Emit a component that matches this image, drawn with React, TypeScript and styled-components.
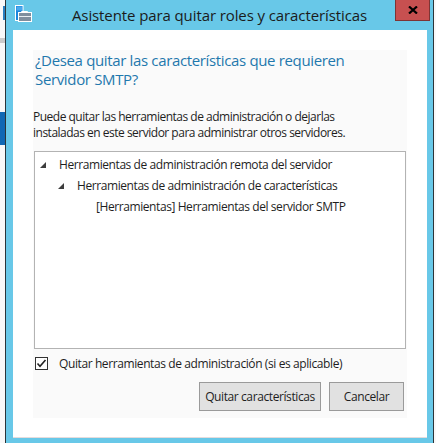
import React from "react";
import styled, { createGlobalStyle } from "styled-components";

const UI_FONT = `"Segoe UI", "Open Sans", "Noto Sans", sans-serif`;

const GlobalStyle = createGlobalStyle`
  html, body {
    margin: 0;
    padding: 0;
    background: #f7f7f7;
    overflow: hidden;
  }
  * {
    box-sizing: border-box;
  }
`;

const Desktop = styled.div`
  width: 436px;
  height: 443px;
  display: flex;
  overflow: hidden;
  background: #f7f7f7;
  font-family: ${UI_FONT};
`;

const BackStrip = styled.div<{ $width: number }>`
  width: ${(p) => p.$width}px;
  flex: none;
  display: flex;
  flex-direction: column;
  overflow: hidden;
  background: #f8f8f8;
`;

/* bits of the window behind the dialog */
const GhostBar = styled.div<{ $top: number; $height: number; $color: string; $inset?: number }>`
  margin-top: ${(p) => p.$top}px;
  margin-left: ${(p) => p.$inset ?? 0}px;
  height: ${(p) => p.$height}px;
  background: ${(p) => p.$color};
  flex: none;
`;

const Window = styled.div`
  width: 429px;
  flex: none;
  display: flex;
  flex-direction: column;
  background: #68c8e8;
  border-left: 1px solid #2b3438;
  border-right: 1px solid #2b3438;
`;

const TitleBar = styled.div`
  height: 30px;
  flex: none;
  display: grid;
  grid-template-columns: minmax(0, 1fr) auto minmax(0, 1fr);
  align-items: start;
`;

const AppIcon = styled.svg`
  margin: 5px 0 0 9px;
  display: block;
`;

const Title = styled.div`
  font-size: 15px;
  line-height: 30px;
  letter-spacing: -0.1px;
  color: #1b1b1b;
  white-space: nowrap;
`;

const CloseButton = styled.button`
  justify-self: end;
  width: 35px;
  height: 21px;
  margin-right: 3px;
  padding: 0;
  display: flex;
  align-items: center;
  justify-content: center;
  background: #c75050;
  border: 1px solid #7e3434;
  border-top: none;
  cursor: default;
`;

const Client = styled.div`
  margin: 0 6px 0 7px;
  height: 408px;
  flex: none;
  padding: 20px 20px 19px;
  background: #ffffff;
  border-bottom: 1px solid #e6dcdc;
`;

const Panel = styled.div`
  height: 368px;
  display: flex;
  flex-direction: column;
  background: #fafafa;
`;

const Heading = styled.h1`
  margin: 1px 0 0;
  padding-left: 2px;
  font-size: 15px;
  font-weight: 400;
  line-height: 19px;
  letter-spacing: -0.35px;
  color: #1f78ad;
`;

const Lead = styled.p`
  margin: 20px 0 0;
  font-size: 12px;
  line-height: 16px;
  letter-spacing: -0.5px;
  color: #1e1e1e;
`;

const TreeBox = styled.div`
  margin: 10px 1px 0;
  height: 198px;
  flex: none;
  padding-top: 2px;
  background: #ffffff;
  border: 1px solid #b3b3b3;
`;

const TreeRow = styled.div<{ $indent: number }>`
  height: 21px;
  display: flex;
  align-items: center;
  padding-left: ${(p) => p.$indent}px;
  font-size: 12px;
  letter-spacing: -0.42px;
  color: #1e1e1e;
  white-space: nowrap;
`;

const Expander = styled.span`
  width: 19px;
  flex: none;
  display: flex;
  align-items: center;
`;

const CheckRow = styled.label`
  margin: 7px 0 0 2px;
  height: 15px;
  display: flex;
  align-items: center;
  gap: 11px;
  font-size: 12px;
  letter-spacing: -0.4px;
  color: #1e1e1e;
`;

const CheckBox = styled.span`
  width: 13px;
  height: 13px;
  flex: none;
  display: flex;
  align-items: center;
  justify-content: center;
  background: #ffffff;
  border: 1px solid #333333;
`;

const ButtonRow = styled.div`
  margin-top: 11px;
  padding-right: 3px;
  display: flex;
  justify-content: flex-end;
  gap: 8px;
`;

const DialogButton = styled.button<{ $width: number }>`
  width: ${(p) => p.$width}px;
  height: 29px;
  padding: 0;
  font-family: ${UI_FONT};
  font-size: 12px;
  letter-spacing: -0.4px;
  color: #1e1e1e;
  background: #e1e1e1;
  border: 1px solid #9a9a9a;
  cursor: default;
`;

const treeItems = [
  { label: "Herramientas de administración remota del servidor", indent: 5, open: true },
  { label: "Herramientas de administración de características", indent: 23, open: true },
  { label: "[Herramientas] Herramientas del servidor SMTP", indent: 42, open: false },
];

const Triangle = () => (
  <svg width="6" height="6" viewBox="0 0 6 6">
    <polygon points="6,0 6,6 0,6" fill="#3d3d3d" />
  </svg>
);

export default function App() {
  return (
    <>
      <GlobalStyle />
      <Desktop>
        <BackStrip $width={5}>
          <GhostBar $top={6} $height={14} $color="#2a7fc0" $inset={3} />
          <GhostBar $top={18} $height={5} $color="#cbcbcb" />
          <GhostBar $top={69} $height={33} $color="#1068b4" />
        </BackStrip>

        <Window>
          <TitleBar>
            <AppIcon width="17" height="17" viewBox="0 0 17 17">
              {/* server tower */}
              <rect x="0.5" y="0.5" width="7.5" height="15" fill="#1b86dc" stroke="#ffffff" />
              <rect x="1.5" y="1.5" width="5.5" height="4" fill="#4aa8ee" />
              {/* briefcase handle */}
              <path d="M6.5 8 V6.5 H12.5 V8" fill="none" stroke="#ffffff" strokeWidth="1" />
              {/* briefcase body */}
              <rect x="3.5" y="7.5" width="13" height="9" fill="#7f8e9e" stroke="#ffffff" />
              <rect x="4" y="11" width="12" height="1" fill="#e8edf2" />
            </AppIcon>
            <Title>Asistente para quitar roles y características</Title>
            <CloseButton aria-label="Cerrar">
              <svg width="10" height="8" viewBox="0 0 10 8">
                <path d="M1 0.5 L9 7.5 M9 0.5 L1 7.5" stroke="#000000" strokeWidth="2.2" />
              </svg>
            </CloseButton>
          </TitleBar>

          <Client>
            <Panel>
              <Heading>
                ¿Desea quitar las características que requieren
                <br />
                Servidor SMTP?
              </Heading>
              <Lead>
                Puede quitar las herramientas de administración o dejarlas
                <br />
                instaladas en este servidor para administrar otros servidores.
              </Lead>

              <TreeBox>
                {treeItems.map((item) => (
                  <TreeRow key={item.label} $indent={item.indent}>
                    <Expander>{item.open && <Triangle />}</Expander>
                    {item.label}
                  </TreeRow>
                ))}
              </TreeBox>

              <CheckRow>
                <CheckBox>
                  <svg width="11" height="9" viewBox="0 0 11 9">
                    <path d="M1.5 4.5 L4 7.2 L9.5 1" fill="none" stroke="#222222" strokeWidth="1.6" />
                  </svg>
                </CheckBox>
                Quitar herramientas de administración (si es aplicable)
              </CheckRow>

              <ButtonRow>
                <DialogButton $width={122}>Quitar características</DialogButton>
                <DialogButton $width={75}>Cancelar</DialogButton>
              </ButtonRow>
            </Panel>
          </Client>
        </Window>

        <BackStrip $width={2} />
      </Desktop>
    </>
  );
}
